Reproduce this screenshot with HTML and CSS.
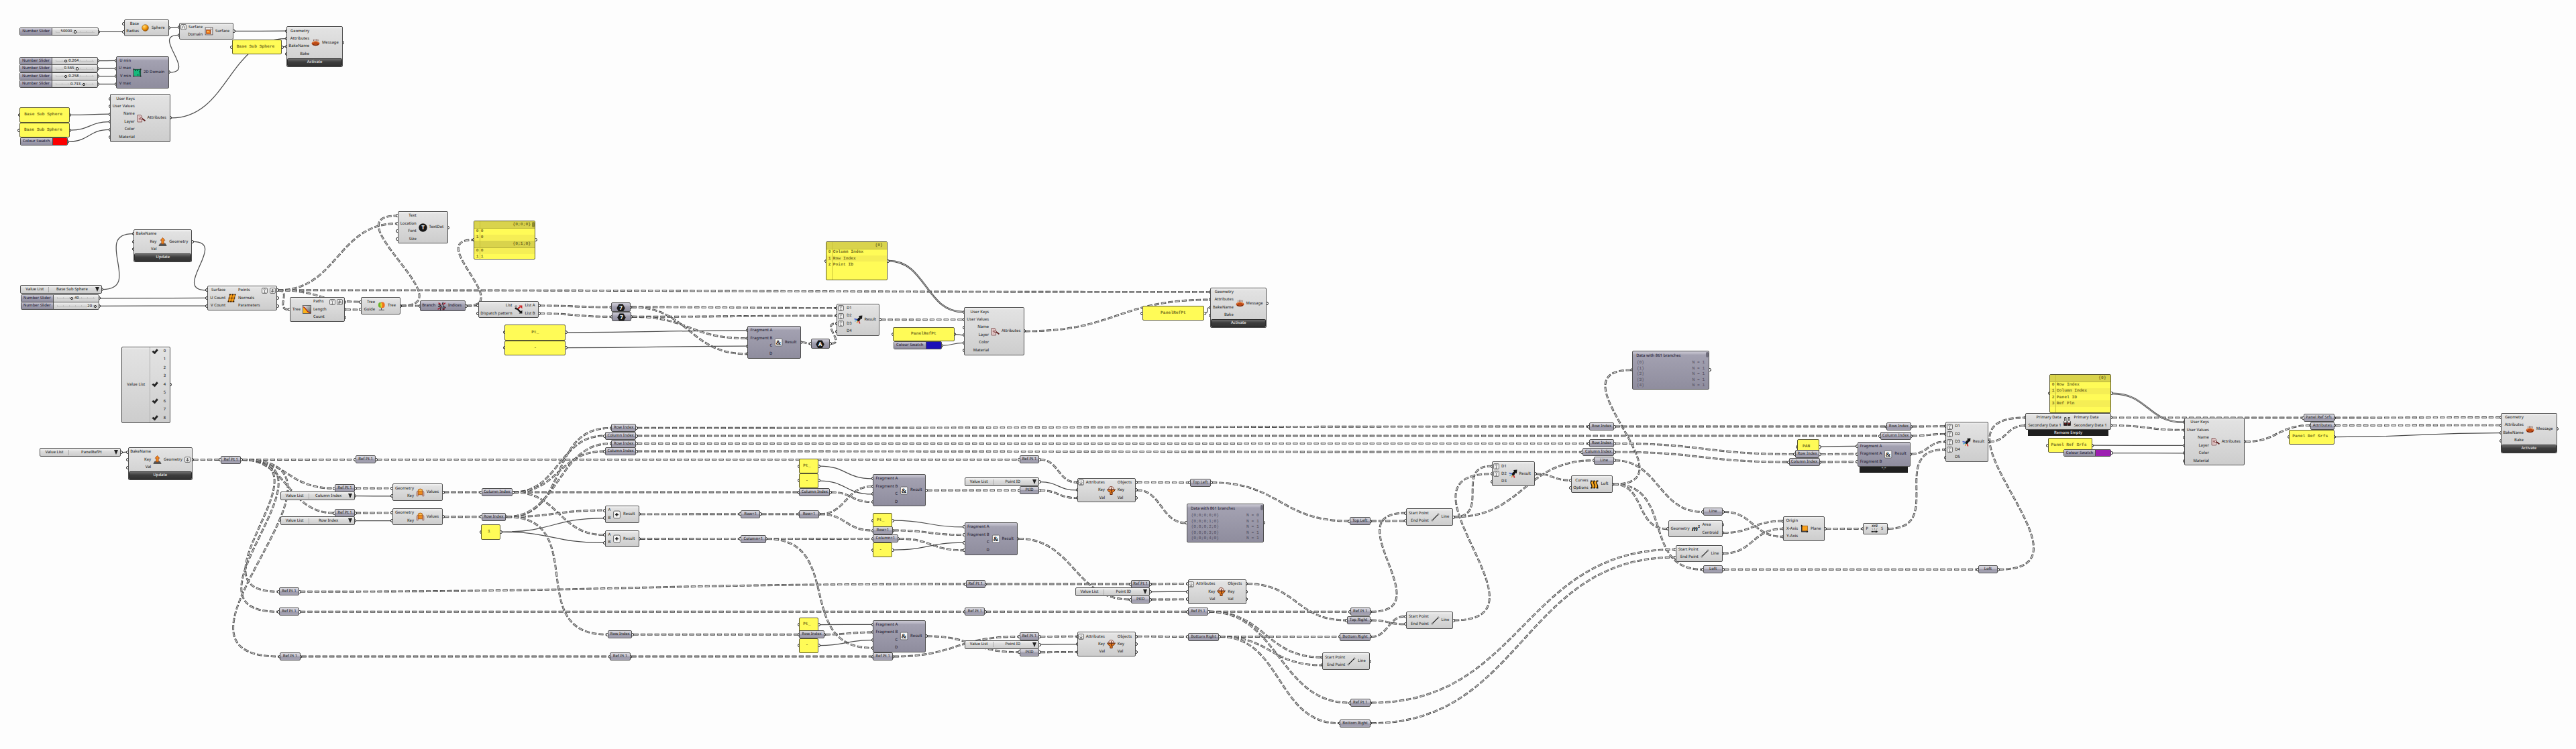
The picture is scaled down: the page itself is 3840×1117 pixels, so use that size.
FILE: index.html
```
<!DOCTYPE html>
<html lang="en">
<head>
<meta charset="utf-8">
<title>Panel reference definition</title>
<link rel="stylesheet" href="styles.css">
</head>
<body>
<svg class="defs" aria-hidden="true">
  <defs>
    <radialGradient id="g-ball" cx=".35" cy=".3" r=".8"><stop offset="0" stop-color="#ffd873"/><stop offset=".5" stop-color="#f59a0c"/><stop offset="1" stop-color="#8f4a00"/></radialGradient>
    <linearGradient id="g-metal" x1="0" x2="1" y2="1"><stop offset="0" stop-color="#f4f4f4"/><stop offset="1" stop-color="#555"/></linearGradient>
  </defs>
</svg>
<template id="icons"><svg>
  <symbol id="sphere" viewBox="0 0 24 24"><circle cx="12" cy="12" r="9" fill="url(#g-ball)" stroke="#7a4a10"/></symbol>
  <symbol id="isotrim" viewBox="0 0 24 24"><rect x="2" y="2" width="20" height="20" fill="#e9e9e9" stroke="#5a5050" stroke-width="1.6"/><path d="M2 8h20M17 2v20" stroke="#8a8080" stroke-width="1.4"/><rect x="5" y="9" width="11" height="10" fill="#f0801a" stroke="#a33c10" stroke-width="1.6"/><rect x="7" y="11" width="4" height="4" fill="#ffc060"/></symbol>
  <symbol id="domain" viewBox="0 0 24 24"><rect x="2.5" y="2.5" width="19" height="19" fill="#15b97c" stroke="#123c2c" stroke-width="1.6"/><path d="M6 6h3m2 0h3M18 6v3m0 2v3M12 18h2m2 0h2" stroke="#0b3d2a" stroke-width="2.4"/><path d="M1 1h3v3H1zM20 1h3v3h-3zM1 20h3v3H1zM20 20h3v3h-3z" fill="#222"/></symbol>
  <symbol id="attributes" viewBox="0 0 24 24"><path d="M2 3h9l3 4v15H2z" fill="#ead2d2" stroke="#6e3a3a" stroke-width="1.5"/><path d="M5 8h5M5 12h5M5 16h5" stroke="#8a4a4a" stroke-width="1.4"/><path d="M10 12l5 1 8 6" fill="none" stroke="#5c1717" stroke-width="3.2"/><circle cx="12" cy="12" r="2.4" fill="#f6dede" stroke="#5c1717"/></symbol>
  <symbol id="bake" viewBox="0 0 24 24"><path d="M6 3q2 2 0 5M10 2q2 3 0 6M14 2q2 3 0 6M18 3q2 2 0 5" fill="none" stroke="#7d5348" stroke-width="1.6"/><ellipse cx="12" cy="14.5" rx="11" ry="6" fill="#bc4a16"/><path d="M3 12q9-6 18 0" fill="none" stroke="#e98a4a" stroke-width="2"/><path d="M4 17.500q8 5 16 0" fill="none" stroke="#5f1f0a" stroke-width="1.8"/></symbol>
  <symbol id="update" viewBox="0 0 24 24"><path d="M5 17h14l3.5 6h-21z" fill="#555" stroke="#222"/><path d="M12 1l6 7h-3v10H9V8H6z" fill="#f28a1e" stroke="#9a3d0a" stroke-width="1.4"/></symbol>
  <symbol id="divide" viewBox="0 0 24 24"><path d="M7 2h15l-5 20H2z" fill="#f7a01a" stroke="#7a3a00" stroke-width="1.6"/><path d="M14.500 2l-5 20M4.500 12h15" stroke="#8a4300" stroke-width="1.4"/><path d="M5 1h4v3H5zM13 1h3v3h-3zM20 1h3v3h-3zM3 10.500h3v3H3zM11 10.500h3v3h-3zM18 10.500h3v3h-3zM1 20h3v3H1zM8 20h3v3H8zM15 20h4v3h-4z" fill="#2a1800"/></symbol>
  <symbol id="stats" viewBox="0 0 24 24"><rect x="1" y="1" width="22" height="22" fill="#fff"/><path d="M1 5C9 5 12 22 23 22V1H1z" fill="url(#g-metal)"/><path d="M1 5C9 5 12 22 23 22L1 23z" fill="#f9b21a"/><path d="M1 5C9 5 12 22 23 22" fill="none" stroke="#b02010" stroke-width="2.4"/><rect x="1" y="1" width="22" height="22" fill="none" stroke="#333" stroke-width="1.3"/></symbol>
  <symbol id="textdot" viewBox="0 0 24 24"><circle cx="12" cy="12" r="11.500" fill="#151515"/><text x="12" y="17.500" class="glyph" font-size="15" fill="#fff">T</text></symbol>
  <symbol id="tree" viewBox="0 0 24 24"><path d="M12 14v8M5 22.500h15" stroke="#555" stroke-width="2"/><ellipse cx="14.500" cy="9" rx="7" ry="8" fill="#f0701c"/><ellipse cx="8.500" cy="9" rx="5" ry="7" fill="#69b52a"/><path d="M9 5q4-3 5 1 1 7-2 11-3-4-3-12z" fill="#e9d22c"/></symbol>
  <symbol id="branches" viewBox="0 0 24 24"><path d="M3 3l6 4M1 21l8-5M14 22l7-4M15 8l7-5" stroke="#a31a2a" stroke-width="2.800"/><path d="M8 23l3-10-4-4-4-1M16 1l-3 7M17 10l-2 8 4 4M2 13l6 1M18 14l5 2" fill="none" stroke="#2b2630" stroke-width="2.400"/></symbol>
  <symbol id="dispatch" viewBox="0 0 24 24"><path d="M3 9q8 1 10 5 3 4 7 6" fill="none" stroke="#1a1a1a" stroke-width="4.400"/><path d="M11 10l6-5" stroke="#c92020" stroke-width="4"/><path d="M14 1h9v9z" fill="#c92020"/><path d="M23 14v9h-9z" fill="#1a1a1a"/><circle cx="6" cy="4" r="2.600" fill="#ddd" stroke="#222"/></symbol>
  <symbol id="hex7" viewBox="0 0 24 24"><path d="M6.500 1h11L23.500 12l-6 11h-11l-6-11z" fill="#191919"/><text x="12" y="17.500" class="glyph" font-size="15" fill="#fff">7</text></symbol>
  <symbol id="hexa" viewBox="0 0 24 24"><path d="M6.500 1h11L23.500 12l-6 11h-11l-6-11z" fill="#191919"/><text x="12" y="17.500" class="glyph" font-size="15" fill="#fff">A</text></symbol>
  <symbol id="amp" viewBox="0 0 24 24"><rect x="2.500" y="2" width="19.500" height="20" rx="2.500" fill="#f6f6f6" stroke="#444" stroke-width="1.300"/><text x="12.200" y="18.500" class="glyph serif" font-size="18" fill="#111">&amp;</text></symbol>
  <symbol id="plus" viewBox="0 0 24 24"><rect x="3" y="2" width="18" height="20" rx="3" fill="#f8f8f8" stroke="#444" stroke-width="1.500"/><path d="M12 7.500v9M7.500 12h9" stroke="#111" stroke-width="3"/></symbol>
  <symbol id="merge" viewBox="0 0 24 24"><path d="M12 13L1 10" stroke="#3a56c8" stroke-width="2.800"/><path d="M12 13L2 17" stroke="#4aa8c8" stroke-width="2.400"/><path d="M12 13L8 22" stroke="#e0902a" stroke-width="2.400"/><path d="M12 12l4 11" stroke="#d42a2a" stroke-width="3.200"/><path d="M9 15q0-7 6-9l-2-4 10-1-1 10-3-2q-2 6-7 8z" fill="#161616"/></symbol>
  <symbol id="values" viewBox="0 0 24 24"><path d="M2 22V12q0-4 4-4v14zM22 22V12q0-4-4-4v14z" fill="#dcb6ac" stroke="#7d5148" stroke-width="1.200"/><path d="M6 6q0-4 6-4t6 4v12H6z" fill="#ee8a1c" stroke="#9a4408" stroke-width="1.300"/><ellipse cx="12" cy="5.500" rx="6" ry="3" fill="#f9c05a" stroke="#9a4408"/></symbol>
  <symbol id="filter" viewBox="0 0 24 24"><path d="M5 9q0-8 6-8 8 0 8 8z" fill="#f1d9d0" stroke="#7c3a2a" stroke-width="1.600"/><path d="M1 9q11 4 22 0-2 6-8 8v6h-6v-6Q3 15 1 9z" fill="#e97c1c" stroke="#5d2206" stroke-width="1.700"/><path d="M12 4v14" stroke="#5d2206" stroke-width="1.800"/></symbol>
  <symbol id="line" viewBox="0 0 24 24"><path d="M4 20L20 4" stroke="#111" stroke-width="2.100"/><circle cx="3.500" cy="20.500" r="2" fill="#ddd" stroke="#444"/><circle cx="20.500" cy="3.500" r="2" fill="#ddd" stroke="#444"/></symbol>
  <symbol id="loft" viewBox="0 0 24 24"><path d="M4 2q-3 5 0 10t0 10h16q3-5 0-10t0-10z" fill="#f3a21c"/><path d="M4 2q-3 5 0 10t0 10M12 2q-3 5 0 10t0 10M20 2q-3 5 0 10t0 10" fill="none" stroke="#1d1204" stroke-width="2.400"/><path d="M2 1h5v3H2zM10 1h4v3h-4zM18 1h5v3h-5zM2 20h5v3H2zM10 20h4v3h-4zM18 20h5v3h-5z" fill="#111"/></symbol>
  <symbol id="area" viewBox="0 0 24 24"><text x="10" y="18" class="glyph" font-size="19" font-style="italic" fill="#111">m</text><text x="21.500" y="10" class="glyph" font-size="10" fill="#111">2</text></symbol>
  <symbol id="plane" viewBox="0 0 24 24"><rect x="6" y="4" width="15" height="14" fill="#f9a11b" stroke="#8c4a00" stroke-width="1.200"/><path d="M5 2v18h17" fill="none" stroke="#111" stroke-width="2"/><path d="M2 5l3-4 3 4zM19 17l4 3-4 3z" fill="#111"/></symbol>
  <symbol id="decon" viewBox="0 0 24 24"><text x="12" y="8" class="glyph" font-size="9" fill="#222">XYZ</text><path d="M5 11l3 5M12 11v5M19 11l-3 5" stroke="#555" stroke-width="1.200" stroke-dasharray="2 1"/><path d="M4 20h12" stroke="#111" stroke-width="2.200"/><path d="M15 16.500l6 3.500-6 3.500z" fill="#111"/><circle cx="5" cy="20" r="2" fill="#111"/></symbol>
  <symbol id="tubes" viewBox="0 0 24 24"><path d="M5 1h4v9l2 2v11H3V12l2-2zM15 1h4v9l2 2v11h-8V12l2-2z" fill="#eee" stroke="#222" stroke-width="1.600"/><path d="M3 15h8v8H3zM13 15h8v8h-8z" fill="#2a1c1c"/><path d="M5 18h3M15 18h3" stroke="#c0202a" stroke-width="2"/></symbol>
  <symbol id="graft" viewBox="0 0 16 16"><rect x="1" y="1" width="14" height="14" rx="2.500" fill="#f1f1f1" stroke="#555" stroke-width="1.500"/><path d="M8 13V4M4.500 7.500L8 4l3.500 3.500M4.500 12V9.500h7V12" fill="none" stroke="#444" stroke-width="1.300"/></symbol>
  <symbol id="flatten" viewBox="0 0 16 16"><rect x="1" y="1" width="14" height="14" rx="2.500" fill="#f1f1f1" stroke="#555" stroke-width="1.500"/><path d="M8 3v8M4.500 8L8 11.500 11.500 8M4 13h8" fill="none" stroke="#444" stroke-width="1.300"/></symbol>
  <symbol id="simplify" viewBox="0 0 16 16"><rect x="1" y="1" width="14" height="14" rx="2.500" fill="#f1f1f1" stroke="#555" stroke-width="1.500"/><path d="M4 3l4 4 4-4M6 3h4M8 7v6M5.500 13h5" fill="none" stroke="#555" stroke-width="1.200"/></symbol>
  <symbol id="reparam" viewBox="0 0 16 16"><rect x="1" y="1" width="14" height="14" rx="2.500" fill="#f1f1f1" stroke="#555" stroke-width="1.500"/><path d="M3 12q2 0 3-5t4-1q0 6 3 6" fill="none" stroke="#333" stroke-width="1.300"/></symbol>
  <symbol id="check" viewBox="0 0 16 14"><path d="M1 7.500l3.500-2.500 2.500 2.500L12.500 1 15.500 3.500 7.500 13z" fill="#222" stroke="#222"/></symbol>
</svg></template>
<main class="canvas" id="canvas"><svg class="wires" id="wires" width="3840" height="1117"></svg></main>
<script src="graph.js"></script>
</body>
</html>
```
FILE: styles.css
```
* { box-sizing: border-box; }
body { margin: 0; background: #fdfdfd; }
.defs { position: absolute; width: 0; height: 0; }
.canvas {
  position: relative;
  width: 3840px;
  height: 1117px;
  overflow: hidden;
  background: #fdfdfd;
  font: 500 5.9px/1 "Noto Sans", "Open Sans", sans-serif;
  color: #2e2e2e;
  text-rendering: geometricPrecision;
  white-space: nowrap;
}
.wires { position: absolute; inset: 0; fill: none; }
.wire { stroke: #4c4c4c; stroke-width: 1.25; }
.wire.pipe { stroke-width: 2.6; }
.wire.pipe-fill { stroke: #c9c9c9; stroke-width: .9; }
.wire.dash { stroke: #4a4a4a; stroke-width: 2.9; stroke-dasharray: 7.4 3; }
.wire.dash-fill { stroke: #cdcdcd; stroke-width: 1.2; stroke-dasharray: 5.8 4.600; stroke-dashoffset: -.8; }

.glyph { font-family: "Noto Sans", sans-serif; font-weight: 700; text-anchor: middle; }
.glyph.serif { font-family: "Liberation Serif", serif; }

.item { position: absolute; }
.shell {
  position: relative;
  height: 100%;
  border: .8px solid #4e4e4e;
  border-radius: 2px;
  background: linear-gradient(#f3f3f3 0, #e2e2e2 3px, #dcdcdc 35%, #cdcdcd 100%);
  overflow: hidden;
}
.dark .shell { background: linear-gradient(#cbc9d4 0, #b3b1bf 4px, #a3a1b1 5px, #8f8d9e 100%); color: #262336; }

.port {
  position: absolute;
  width: 5px;
  height: 5px;
  margin-top: -2.5px;
  border: 1.1px solid #111;
  border-radius: 50%;
  background: #fff;
}
.port.in { left: -2.6px; }
.port.out { right: -2.6px; }

.body { display: grid; height: 100%; padding: .5px 0; }
.col { display: flex; flex-direction: column; min-width: 0; }
.row { flex: 1; display: flex; align-items: center; gap: 3px; }
.col.ins .row { justify-content: flex-end; }
.col.outs .row { padding-right: 1.5px; }
.badge { width: 9px; height: 9px; flex: none; }
.ins .badge { margin: 0 auto 0 .5px; }
.outs .badge:first-of-type { margin-left: auto; }
.outs .badge + .badge { margin-left: -.6px; }
.icon { width: 13px; height: 13px; place-self: center; }

.button {
  position: absolute;
  left: 0; right: 0; bottom: 0;
  display: flex; align-items: center; justify-content: center;
  height: 11.8px;
  border: .8px solid #2a2a2a;
  border-radius: 1.5px;
  background: linear-gradient(#6a6a6a, #3d3d3d 45%, #333);
  color: #efefef;
}
.tab {
  position: absolute;
  left: 3.800px; right: 3.800px; top: 100%;
  display: flex; align-items: center; justify-content: center;
  height: 9px;
  background: #1f1f1f;
  color: #e4e4e4;
}

.relay .shell { display: flex; align-items: center; justify-content: center; background: linear-gradient(#dad9e0 0, #bfbdc9 45%, #9b99a9 55%, #a7a5b5 100%); }

.slider .shell, .list .shell { display: flex; align-items: stretch; }
.label { display: flex; align-items: center; justify-content: center; flex: none; }
.slider .label, .swatch .label { background: linear-gradient(#cbc9d4, #a19fb0 50%, #8f8d9e); border-right: .8px solid #4e4e4e; color: #262336; }
.track { position: relative; flex: 1; }
.ticks { position: absolute; left: 5px; right: 5px; top: 3.500px; height: 3px; border-bottom: .5px solid #b4b4b4; background: repeating-linear-gradient(90deg, #b0b0b0 0 .7px, transparent .7px 9px); opacity: .6; }
.value { position: absolute; top: 2.300px; padding: 0 .5px; background: #dfdfdf; }
.knob { position: absolute; top: 3.300px; width: 4.400px; height: 4.400px; border: 1.200px solid #111; border-radius: 50%; background: #fff; }
.swatch .shell { display: flex; }
.colour { flex: 1; }
.choice { flex: 1; display: flex; align-items: center; justify-content: center; border-left: .6px solid #a8a8a8; margin: 1.500px 0; }
.arrow { align-self: center; margin-right: 3px; border: 3.600px solid transparent; border-top: 7px solid #222; border-bottom: 0; }

.checks .shell { display: grid; grid-template-columns: 41px 1fr; align-items: center; }
.checks .name { text-align: center; }
.checks .rows { border-left: .6px solid #b0b0b0; height: 100%; display: flex; flex-direction: column; }
.checks .opt { flex: 1; display: grid; grid-template-columns: 14px 1fr; align-items: center; text-align: center; }
.checks .opt svg { width: 10px; height: 8.500px; justify-self: center; }
.checks .opt span { grid-column: 2; }

.panel { font: 700 6.300px/1 "Liberation Mono", monospace; color: #77721f; }
.panel .shell { background: #fffb57; border-color: #5a5830; }
.note .shell { display: flex; align-items: center; padding: 0 6px; }
.note.tight .shell { padding: 0 4px; }
.note.center .shell { justify-content: center; }
.note.small .shell { justify-content: center; padding: 0 6px 0 0; }
.sheet .head { height: 10.700px; padding: 2px 6.500px 0 0; text-align: right; background: #d9d34c; border-bottom: .5px solid #b9b43a; }
.sheet .line { display: flex; align-items: center; height: 9.200px; }
.sheet .line:nth-child(odd) { background: #f5ee55; }
.sheet .line i { width: 9.500px; padding-left: 2.500px; font-style: normal; flex: none; }
.sheet .rule { position: absolute; left: 8px; top: 0; bottom: 0; width: .6px; background: #c9c33a; }
.sheet .thumb, .data .thumb { position: absolute; right: 0; top: .5px; width: 4px; height: 8px; border-radius: 2px; background: #8f8b2c; }
.data .thumb { background: #6f6d7c; }
.data .title { height: 12.800px; padding: 4px 0 0 5px; }
.data .pair { display: flex; justify-content: space-between; align-items: center; height: 8.600px; padding: 0 6px 0 5.500px; font: 6.300px/1 "Liberation Mono", monospace; color: #4f4c5e; }
```
FILE: graph.js
```
const canvas = document.getElementById('canvas');
const wires = document.getElementById('wires');
const NS = 'http://www.w3.org/2000/svg';
const ROW = 11.47;
const items = {};

function el(cls, parent, text) {
  const e = document.createElement('div');
  e.className = cls;
  if (text !== undefined) e.textContent = text;
  parent.appendChild(e);
  return e;
}
const icons = document.getElementById('icons').content;
function icon(name, cls, parent) {
  const src = icons.querySelector('#' + name);
  const s = document.createElementNS(NS, 'svg');
  s.setAttribute('class', cls);
  s.setAttribute('viewBox', src.getAttribute('viewBox'));
  s.append(...src.cloneNode(true).childNodes);
  parent.appendChild(s);
}
function item(id, cls, x, y, w, h, ins, outs, portH) {
  const e = document.createElement('div');
  e.className = 'item ' + cls;
  e.style.cssText = `left:${x}px;top:${y}px;width:${w}px;height:${h}px`;
  const ph = portH || h;
  const rec = { in: [], out: [] };
  for (let i = 0; i < ins; i++) {
    const cy = ph * 0.5 + (i - (ins - 1) / 2) * ((ph - 2) / ins);
    el('port in', e).style.top = cy + 'px';
    rec.in.push([x - 1.6, y + cy]);
  }
  for (let i = 0; i < outs; i++) {
    const cy = ph * 0.5 + (i - (outs - 1) / 2) * ((ph - 2) / outs);
    el('port out', e).style.top = cy + 'px';
    rec.out.push([x + w + 1.6, y + cy]);
  }
  items[id] = rec;
  canvas.appendChild(e);
  return [e, el('shell', e)];
}

/* "Name" or "Name|badge|badge" */
function fill(col, names, before) {
  names.filter(Boolean).forEach(n => {
    const [name, ...badges] = n.split('|');
    const row = el('row', col);
    if (before) badges.forEach(b => icon(b, 'badge', row));
    const s = document.createElement('span');
    s.textContent = name;
    row.appendChild(s);
    if (!before) badges.forEach(b => icon(b, 'badge', row));
  });
}
function node(id, x, y, w, ic, sym, ins, outs, o = {}) {
  ins = ins.split(','); outs = outs.split(',');
  const n = Math.max(ins.length, outs.length);
  const body = o.h || n * ROW + 2.5;
  const total = body + (o.button ? 12 : 0);
  const [e, shell] = item(id, 'node' + (o.dark ? ' dark' : ''), x, y, w, total, ins.length, outs.length, body);
  const g = el('body', shell);
  g.style.height = body - 1.6 + 'px';
  g.style.gridTemplateColumns = `${ic - 10.2}px 18.8px 1fr`;
  fill(el('col ins', g), ins, true);
  icon(sym, 'icon', g);
  fill(el('col outs', g), outs, false);
  if (o.button) el('button', shell, o.button);
  if (o.tab) el('tab', e, o.tab);
}
function relay(id, x, cy, w, text) {
  const [, s] = item(id, 'relay', x, cy - 6, w, 12, 1, 1);
  s.textContent = text;
}
function slider(id, x, y, w, label, value, vx, kx) {
  const [, s] = item(id, 'slider', x, y, w, 12, 0, 1);
  el('label', s, 'Number Slider').style.width = label + 'px';
  const t = el('track', s);
  el('ticks', t);
  el('value', t, value).style.left = vx - x - label - 1.2 + 'px';
  el('knob', t).style.left = kx - x - label - 3 + 'px';
}
function list(id, x, y, w, label, text) {
  const [, s] = item(id, 'list', x, y, w, 13, 0, 1);
  el('label', s, 'Value List').style.width = label + 'px';
  el('choice', s, text);
  el('arrow', s);
}
function swatch(id, x, y, w, colour) {
  const [, s] = item(id, 'swatch', x, y, w, 11.6, 0, 1);
  el('label', s, 'Colour Swatch').style.width = '47.500px';
  el('colour', s).style.background = colour;
}
function note(id, x, y, w, h, text, cls = '') {
  const [, s] = item(id, 'panel note ' + cls, x, y, w, h, 1, 1);
  s.textContent = text;
}
function sheet(id, x, y, w, groups, thumb) {
  const [, s] = item(id, 'panel sheet', x, y, w, 57.6, 1, 1);
  groups.forEach(([head, ...rows]) => {
    el('head', s, head);
    rows.forEach((r, i) => {
      const l = el('line', s);
      const k = document.createElement('i');
      k.textContent = i;
      l.append(k, r);
    });
  });
  el('rule', s);
  if (thumb) el('thumb', s);
}
function data(id, x, y, w, rows) {
  const [, s] = item(id, 'dark data', x, y, w, 57.6, 1, 1);
  el('title', s, 'Data with 861 branches');
  rows.forEach(([a, b]) => {
    const p = el('pair', s);
    p.append(Object.assign(document.createElement('span'), { textContent: a }));
    p.append(Object.assign(document.createElement('span'), { textContent: b }));
  });
  el('thumb', s);
}

/* sphere and base surface */
slider('s1', 29.3, 41, 117.3, 48, '50000', 90.3, 112);
slider('s2', 29, 84.6, 116.8, 48, '0.264', 102, 98);
slider('s3', 29, 96.1, 116.8, 48, '0.565', 95.3, 115);
slider('s4', 29, 107.7, 116.8, 48, '0.258', 102, 98);
slider('s5', 29, 119.300, 116.8, 48, '0.733', 104.7, 124.7);
node('sph', 184.7, 28.7, 67, 31.7, 'sphere', 'Base,Radius', 'Sphere');
node('dom', 173.3, 83.7, 78.5, 31, 'domain', 'U min,U max,V min,V max', '2D Domain', { dark: 1 });
node('iso', 267.3, 33.7, 80.7, 44, 'isotrim', 'Surface|reparam,Domain', 'Surface');
note('p1', 345.7, 59, 74.6, 22, 'Base Sub Sphere');
node('msg1', 427.3, 39.300, 83.600, 43, 'bake', 'Geometry,Attributes,BakeName,Bake', 'Message', { button: 'Activate' });
note('p2', 29.3, 160.3, 74.5, 22.300, 'Base Sub Sphere');
note('p3', 29, 183, 74.5, 22, 'Base Sub Sphere');
swatch('c1', 30, 205.400, 70.8, '#fb0000');
node('att1', 164.3, 140.3, 89.3, 45.7, 'attributes', 'User Keys,User Values,Name,Layer,Color,Material', 'Attributes');

/* panel reference points */
node('upd1', 199.4, 341.9, 87, 43.3, 'update', 'BakeName,Key,Val', 'Geometry', { button: 'Update' });
list('v1', 30.3, 425, 121.3, 41, 'Base Sub Sphere');
slider('s6', 31, 438.8, 116.500, 47.5, '40', 110.7, 106.7);
slider('s7', 31, 450.300, 116.500, 47.5, '20', 130, 141.7);
node('div', 308.8, 426, 104.300, 36.6, 'divide', 'Surface,U Count,V Count', 'Points|simplify|graft,Normals,Parameters');
node('stat', 432, 443.2, 81.7, 25.3, 'stats', 'Tree', 'Paths|simplify|graft,Length,Count');
node('dot', 593, 315, 74.7, 37, 'textdot', 'Text,Location,Font,Size', 'TextDot');
sheet('p4', 706.3, 329, 92.2, [['{0;0;0}', '0', '0'], ['{0;1;0}', '0', '1']], true);
node('tree', 538, 443.3, 58.5, 30.3, 'tree', 'Tree,Guide', 'Tree');
node('br', 626.3, 448, 67.8, 32, 'branches', 'Branch', 'Indices', { dark: 1, h: 16.2 });
node('disp', 712.8, 449, 90.3, 60, 'dispatch', 'List,Dispatch pattern', 'List A,List B');
node('h1', 911.3, 451, 28.5, 14, 'hex7', '', '', { dark: 1, h: 14 });
node('h2', 912.2, 465.3, 28.5, 14, 'hex7', '', '', { dark: 1, h: 14 });
note('p5', 752.3, 484.200, 91.2, 23.4, 'Pt_', 'center');
note('p6', 752.3, 507.8, 91, 21.800, '-', 'center');
node('and1', 1114.3, 486.2, 79.4, 46.2, 'amp', 'Fragment A,Fragment B,C,D', 'Result', { dark: 1 });
node('h3', 1208.600, 505.300, 28.8, 14, 'hexa', '', '', { dark: 1, h: 14.300 });
node('mrg1', 1247.3, 452.6, 64.1, 31.6, 'merge', 'D1|simplify,D2|simplify,D3|simplify,D4', 'Result');
sheet('p7', 1231.3, 360.3, 92.1, [['{0}', 'Column Index', 'Row Index', 'Point ID']]);
note('p8', 1331.3, 487.6, 91.4, 21.800, 'PanelRefPt', 'center');
swatch('c2', 1332, 509.4, 71.7, '#1a10b6');
node('att2', 1437.1, 458.3, 89.6, 46.3, 'attributes', 'User Keys,User Values,Name,Layer,Color,Material', 'Attributes');
note('p9', 1703, 456.2, 92, 21.800, 'PanelRefPt', 'center');
node('msg2', 1804.3, 428.6, 84, 43.7, 'bake', 'Geometry,Attributes,BakeName,Bake', 'Message', { button: 'Activate' });

/* multi-select value list */
{
  const [, s] = item('checks', 'checks', 181.3, 516.600, 72.3, 114.2, 0, 1);
  el('name', s, 'Value List');
  const rows = el('rows', s);
  for (let i = 0; i < 9; i++) {
    const r = el('opt', rows);
    if ([0, 4, 6, 8].includes(i)) icon('check', 'tick', r);
    r.appendChild(Object.assign(document.createElement('span'), { textContent: i }));
  }
}

/* reference points read back by index */
list('v2', 59.2, 668, 121, 41.5, 'PanelRefPt');
node('upd2', 191, 667.2, 95.6, 43.300, 'update', 'BakeName,Key,Val', 'Geometry|graft', { button: 'Update' });
relay('r1', 329, 685.5, 30.4, 'Ref Pt 1');
relay('r2', 529.8, 685.4, 30.5, 'Ref Pt 1');
list('v3', 417.6, 733.2, 111, 41, 'Column Index');
list('v4', 417.6, 770, 111, 41, 'Row Index');
relay('r3', 499, 728.3, 30, 'Ref Pt 1');
relay('r4', 499, 765, 30, 'Ref Pt 1');
node('val1', 585, 721.3, 75.2, 41.2, 'values', 'Geometry,Key', 'Values');
node('val2', 585, 758, 75.2, 41.2, 'values', 'Geometry,Key', 'Values');
relay('r5', 415.6, 882.3, 30.4, 'Ref Pt 1');
relay('r6', 415.6, 912.3, 30.4, 'Ref Pt 1');
relay('r7', 417.300, 979, 30.4, 'Ref Pt 1');

relay('ri1', 911.4, 638.3, 36.8, 'Row Index');
relay('ci1', 902, 650, 46.2, 'Column Index');
relay('ri2', 911.4, 661.5, 36.8, 'Row Index');
relay('ci2', 902, 673, 46.2, 'Column Index');
relay('ci0', 717.5, 734, 46.6, 'Column Index');
relay('ri0', 717.5, 770.8, 36.4, 'Row Index');
note('one', 717.4, 782, 29, 22.500, '1', 'small');
node('add1', 902, 754.2, 50.7, 17.5, 'plus', 'A,B', 'Result');
node('add2', 902, 790.8, 50.7, 17.5, 'plus', 'A,B', 'Result');
relay('row1', 1104, 766.7, 29.4, 'Row+1');
relay('row2', 1191.3, 766.7, 29.4, 'Row+1');
relay('col1', 1104, 803.6, 37.6, 'Column+1');
note('p10', 1191.3, 684, 29, 22, 'Pt_', 'small');
note('p11', 1191.3, 706.1, 29, 21.800, '-', 'small');
relay('ci3', 1191.3, 734, 46.2, 'Column Index');
note('p12', 1191.3, 920.5, 29, 22, 'Pt_', 'small');
note('p13', 1191.3, 951.600, 29.2, 22, '-', 'small');
relay('ri3', 1191.3, 946.2, 37.4, 'Row Index');
relay('ri4', 905.8, 946.2, 36.700, 'Row Index');
relay('r8', 909.4, 979, 30.2, 'Ref Pt 1');

/* corner lookups */
node('and2', 1301.2, 707, 79.3, 46.3, 'amp', 'Fragment A,Fragment B,C,D', 'Result', { dark: 1 });
relay('r9', 1519.6, 685.4, 29.600, 'Ref Pt 1');
list('v5', 1437.6, 712.2, 111.4, 41, 'Point ID');
relay('pt1', 1520, 731.3, 29, 'PtID');
node('flt1', 1606.2, 712.5, 87.3, 50, 'filter', 'Attributes|flatten,Key,Val', 'Objects,Key,Val');
relay('tl1', 1773.6, 719.7, 31.400, 'Top Left');
data('d1', 1769, 751.1, 114.8, [['{0;0;0;0;0}', 'N = 0'], ['{0;0;0;1;0}', 'N = 1'], ['{0;0;0;2;0}', 'N = 1'], ['{0;0;0;3;0}', 'N = 1'], ['{0;0;0;4;0}', 'N = 1']]);
note('p14', 1301.2, 765, 29, 22, 'Pt_', 'small');
note('p15', 1301.2, 809.200, 29, 22, '-', 'small');
relay('row3', 1301.2, 791, 29.4, 'Row+1');
relay('col2', 1301.2, 803.4, 37.4, 'Column+1');
node('and3', 1437.6, 779.2, 79.3, 46.3, 'amp', 'Fragment A,Fragment B,C,D', 'Result', { dark: 1 });
relay('r10', 1439.6, 871, 29.300, 'Ref Pt 1');
relay('r11', 1685.7, 871, 28.8, 'Ref Pt 1');
list('v6', 1602.5, 876, 111.500, 41, 'Point ID');
relay('pt2', 1685.7, 894, 28.8, 'PtID');
node('flt2', 1770.6, 863.8, 87.3, 50, 'filter', 'Attributes|flatten,Key,Val', 'Objects,Key,Val');
relay('r12', 1438.3, 912.3, 29.8, 'Ref Pt 1');
relay('r13', 1770.8, 912.3, 30.2, 'Ref Pt 1');
node('and4', 1301.2, 924.6, 79.3, 46.3, 'amp', 'Fragment A,Fragment B,C,D', 'Result', { dark: 1 });
relay('r14', 1301.2, 979, 29.700, 'Ref Pt 1');
list('v7', 1437.6, 954.6, 111.4, 41, 'Point ID');
relay('r15', 1519.6, 949.4, 29.600, 'Ref Pt 1');
relay('pt3', 1520, 972.7, 29, 'PtID');
node('flt3', 1606.2, 942.3, 87.3, 50, 'filter', 'Attributes|flatten,Key,Val', 'Objects,Key,Val');
relay('bo1', 1770.8, 949.5, 46.300, 'Bottom Right');

/* panel edges and surfaces */
relay('tl2', 2011.7, 777, 31, 'Top Left');
node('ln1', 2096, 758.3, 70, 43, 'line', 'Start Point,End Point', 'Line');
node('mrg2', 2224.3, 688.3, 63.9, 30.7, 'merge', 'D1|simplify,D2|simplify,D3', 'Result');
relay('r16', 2012.7, 912.3, 30, 'Ref Pt 1');
relay('tr', 2007.5, 925, 35.200, 'Top Right');
relay('bo2', 1997.3, 949.600, 45.4, 'Bottom Right');
node('ln2', 2096, 912.3, 70, 43, 'line', 'Start Point,End Point', 'Line');
node('ln3', 1971.4, 973.4, 70.200, 43, 'line', 'Start Point,End Point', 'Line');
relay('r17', 2012.7, 1048, 30, 'Ref Pt 1');
relay('bo3', 1997.3, 1078.600, 45.4, 'Bottom Right');
data('d2', 2433.2, 523.1, 115.2, [['{0}', 'N = 1'], ['{1}', 'N = 1'], ['{2}', 'N = 1'], ['{3}', 'N = 1'], ['{4}', 'N = 1']]);
relay('ri5', 2369, 636, 37, 'Row Index');
relay('ri6', 2369, 661.4, 37, 'Row Index');
relay('ci4', 2359, 674.1, 47.3, 'Column Index');
relay('lr1', 2376.3, 686.7, 29.8, 'Line');
node('loft', 2341.8, 709.4, 62, 35, 'loft', 'Curves,Options', 'Loft');
relay('lr2', 2539, 763.4, 29.3, 'Line');
node('area', 2486.8, 776, 80.9, 41, 'area', 'Geometry', 'Area,Centroid');
node('ln4', 2497.6, 812.6, 70, 43.3, 'line', 'Start Point,End Point', 'Line');
relay('lo1', 2539, 849.3, 29.3, 'Loft');
node('pln', 2658.3, 770.200, 62, 31, 'plane', 'Origin,X-Axis,Y-Axis', 'Plane');
node('dec', 2777.2, 780.3, 36.400, 17.2, 'decon', 'P', 'S', { h: 16.300 });
relay('ri7', 2812.2, 636, 36.400, 'Row Index');
relay('ci5', 2802.5, 650, 46.4, 'Column Index');
note('pan', 2679.4, 655, 32.7, 22, 'PAN', 'small');
relay('ri8', 2675.7, 677.4, 36.800, 'Row Index');
relay('ci6', 2666.5, 689, 46, 'Column Index');
node('and5', 2768.7, 658.6, 79, 46, 'amp', 'Fragment A,Fragment A,Fragment B', 'Result', { dark: 1, tab: '"-"' });

/* attributes and bake */
node('mrg3', 2900.1, 629, 63.6, 31, 'merge', 'D1|simplify,D2|simplify,D3|simplify,D4|simplify,D5', 'Result');
relay('lo2', 2948.8, 849.3, 29.200, 'Loft');
node('rem', 3019.3, 616, 127.600, 62.500, 'tubes', 'Primary Data,Secondary Data 1', 'Primary Data,Secondary Data 1', { tab: 'Remove Empty' });
sheet('p16', 3055.3, 558.100, 91.8, [['{0}', 'Row Index', 'Column Index', 'Panel ID', 'Ref Pln']]);
note('p17', 3052.6, 653, 66, 22.200, 'Panel Ref Srfs', 'tight');
swatch('c3', 3075.8, 669.7, 71.4, '#9c1fb1');
node('att3', 3256.400, 623, 89.4, 45.7, 'attributes', 'User Keys,User Values,Name,Layer,Color,Material', 'Attributes');
relay('prs', 3433.600, 623, 46, 'Panel Ref Srfs');
relay('atr', 3444.200, 634.500, 35.400, 'Attributes');
note('p18', 3412.3, 640.6, 67.300, 22, 'Panel Ref Srfs', 'tight');
node('msg3', 3728.2, 615.700, 83.400, 43, 'bake', 'Geometry,Attributes,BakeName,Bake', 'Message', { button: 'Activate' });

/* "from[.port] to[.port]" */
const solid = `s1 sph.1;sph iso.0;s2 dom.0;s3 dom.1;s4 dom.2;s5 dom.3;dom iso.1;iso msg1.0;att1 msg1.1;p1 msg1.2;
p2 att1.2;p3 att1.3;c1 att1.4;v1 upd1.0;upd1 div.0;s6 div.1;s7 div.2;p5 and1.0;p6 and1.2;p8 att2.3;c2 att2.4;p9 msg2.2;
v2 upd2.0;v3 val1.1;v4 val2.1;one add1.1;one add2.1;p10 and2.0;p11 and2.2;p12 and4.0;p13 and4.2;p14 and3.0;p15 and3.2;
v5 flt1.1;v6 flt2.1;v7 flt3.1;pan and5.0;p17 att3.3;c3 att3.4;p18 msg3.2`;
const double = `p7 att2.0;p16 att3.0`;
const tree = `div msg2.0;div dot.1;div stat.0;div tree.0;stat.1 tree.1;tree dot.0;tree br;br disp.0;br p4;
disp.0 h1;disp.1 h2;h1 mrg1.0;h2 mrg1.1;h1 and1.3;h2 and1.1;and1 h3;h3 mrg1.2;mrg1 att2.1;att2 msg2.1;
upd2 r1;r1 r2;r1 r3;r1 r4;r1 r5;r1 r6;r1 r7;r2 r9;r3 val1.0;r4 val2.0;val1 ci0;val2 ri0;
ci0 ci1;ci0 ci2;ri0 ri1;ri0 ri2;ci0 ci3;ci0 add2.0;ri0 add1.0;ri0 ri4;add1 row1;row1 row2;row2 and2.1;row2 row3;
add2 col1;col1 col2;col1 and4.3;ci3 and2.3;ri4 ri3;ri3 and4.1;r5 r10;r6 r12;r7 r8;r8 r14;r14 r15;r15 flt3.0;
and2 pt1;pt1 flt1.2;r9 flt1.0;flt1.0 tl1;flt1.1 d1;tl1 tl2;tl2 ln1.1;row3 and3.1;col2 and3.3;and3 pt2;pt2 flt2.2;
r10 r11;r11 flt2.0;flt2.0 tr;r12 r13;and4 pt3;pt3 flt3.2;flt3.0 bo1;r13 r16;r13 ln3.0;r13 r17;bo1 bo2;bo1 ln3.1;bo1 bo3;
r16 ln1.0;tr ln2.1;bo2 ln2.0;ln1 mrg2.0;ln2 mrg2.1;ln1 lr1;mrg2 loft.0;loft d2;loft area;loft lo1;lr1 lr2;lr2 pln.2;
r17 ln4.0;bo3 ln4.1;area.1 pln.0;ln4 pln.1;pln dec;dec mrg3.3;ri1 ri5;ri5 ri7;ri7 mrg3.0;ci1 ci5;ci5 mrg3.1;
ri2 ri6;ri6 ri8;ri8 and5.1;ci2 ci4;ci4 ci6;ci6 and5.2;and5 mrg3.2;mrg3 rem.1;lo2 rem.0;lo1 lo2;
rem.0 prs;rem.1 att3.1;prs msg3.0;att3 atr;atr msg3.1`;

function end(ref, side) {
  const [id, i] = ref.split('.');
  return items[id][side][i || 0];
}
function draw(spec, classes) {
  spec.split(';').forEach(s => {
    const [a, b] = s.trim().split(' ');
    const [x1, y1] = end(a, 'out'), [x2, y2] = end(b, 'in');
    const k = Math.max((x2 - x1) / 2, Math.abs(y2 - y1) * 0.72);
    classes.forEach(c => {
      const p = document.createElementNS(NS, 'path');
      p.setAttribute('class', c);
      p.setAttribute('d', `M${x1} ${y1}C${x1 + k} ${y1} ${x2 - k} ${y2} ${x2} ${y2}`);
      wires.appendChild(p);
    });
  });
}
draw(tree, ['wire dash', 'wire dash-fill']);
draw(double, ['wire pipe', 'wire pipe-fill']);
draw(solid, ['wire']);
```
